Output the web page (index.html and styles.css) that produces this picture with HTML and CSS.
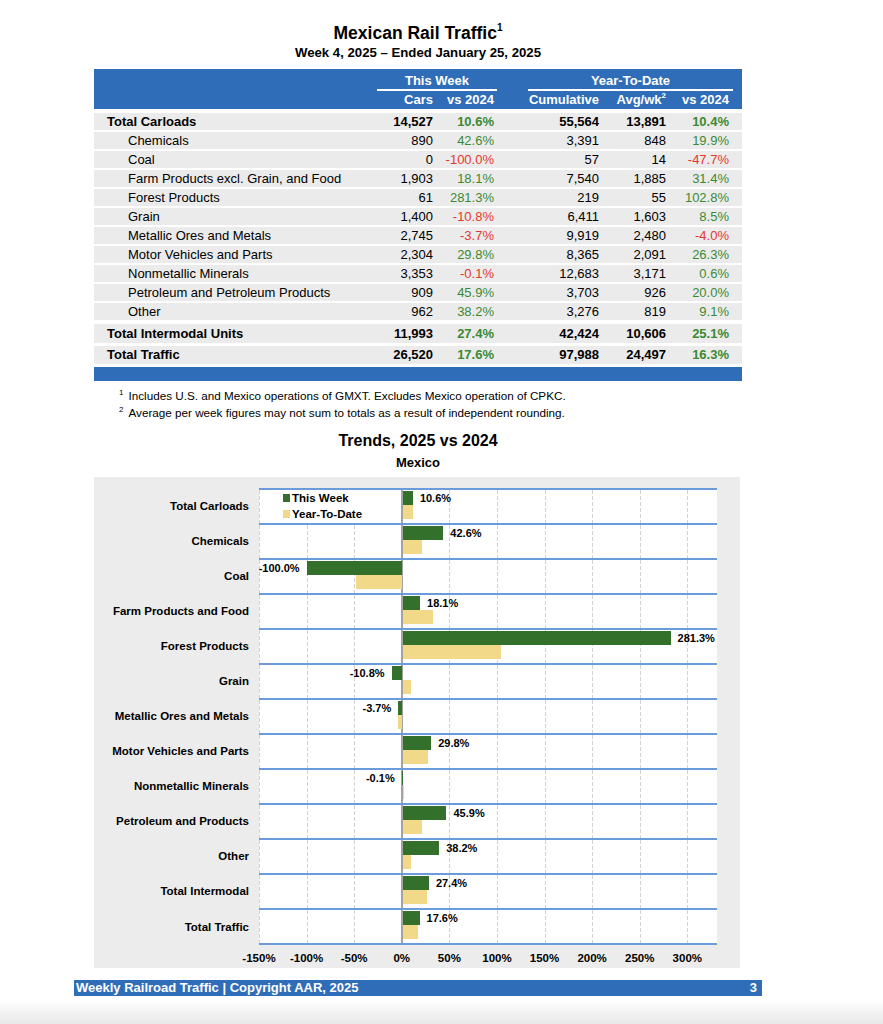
FILE: index.html
```html
<!DOCTYPE html>
<html>
<head>
<meta charset="utf-8">
<link rel="stylesheet" href="styles.css">
</head>
<body>
<div class="page">
  <h1 class="title">Mexican Rail Traffic<sup>1</sup></h1>
  <div class="subtitle">Week 4, 2025 – Ended January 25, 2025</div>

  <div class="thead">
    <div class="row r1">
      <span></span><span class="grp tw">This Week</span><span></span><span class="grp ytd">Year-To-Date</span><span></span>
    </div>
    <div class="row r2">
      <span></span><span class="num">Cars</span><span class="num">vs 2024</span><span></span><span class="num">Cumulative</span><span class="num">Avg/wk<sup>2</sup></span><span class="num">vs 2024</span><span></span>
    </div>
  </div>

  <div class="tbody">
    <div class="row tr total first"><span class="lab">Total Carloads</span><span class="num">14,527</span><span class="num g">10.6%</span><span></span><span class="num">55,564</span><span class="num">13,891</span><span class="num g">10.4%</span><span></span></div>
    <div class="row tr"><span class="lab">Chemicals</span><span class="num">890</span><span class="num g">42.6%</span><span></span><span class="num">3,391</span><span class="num">848</span><span class="num g">19.9%</span><span></span></div>
    <div class="row tr"><span class="lab">Coal</span><span class="num">0</span><span class="num r">-100.0%</span><span></span><span class="num">57</span><span class="num">14</span><span class="num r">-47.7%</span><span></span></div>
    <div class="row tr"><span class="lab">Farm Products excl. Grain, and Food</span><span class="num">1,903</span><span class="num g">18.1%</span><span></span><span class="num">7,540</span><span class="num">1,885</span><span class="num g">31.4%</span><span></span></div>
    <div class="row tr"><span class="lab">Forest Products</span><span class="num">61</span><span class="num g">281.3%</span><span></span><span class="num">219</span><span class="num">55</span><span class="num g">102.8%</span><span></span></div>
    <div class="row tr"><span class="lab">Grain</span><span class="num">1,400</span><span class="num r">-10.8%</span><span></span><span class="num">6,411</span><span class="num">1,603</span><span class="num g">8.5%</span><span></span></div>
    <div class="row tr"><span class="lab">Metallic Ores and Metals</span><span class="num">2,745</span><span class="num r">-3.7%</span><span></span><span class="num">9,919</span><span class="num">2,480</span><span class="num r">-4.0%</span><span></span></div>
    <div class="row tr"><span class="lab">Motor Vehicles and Parts</span><span class="num">2,304</span><span class="num g">29.8%</span><span></span><span class="num">8,365</span><span class="num">2,091</span><span class="num g">26.3%</span><span></span></div>
    <div class="row tr"><span class="lab">Nonmetallic Minerals</span><span class="num">3,353</span><span class="num r">-0.1%</span><span></span><span class="num">12,683</span><span class="num">3,171</span><span class="num g">0.6%</span><span></span></div>
    <div class="row tr"><span class="lab">Petroleum and Petroleum Products</span><span class="num">909</span><span class="num g">45.9%</span><span></span><span class="num">3,703</span><span class="num">926</span><span class="num g">20.0%</span><span></span></div>
    <div class="row tr"><span class="lab">Other</span><span class="num">962</span><span class="num g">38.2%</span><span></span><span class="num">3,276</span><span class="num">819</span><span class="num g">9.1%</span><span></span></div>
    <div class="row tr total ti"><span class="lab">Total Intermodal Units</span><span class="num">11,993</span><span class="num g">27.4%</span><span></span><span class="num">42,424</span><span class="num">10,606</span><span class="num g">25.1%</span><span></span></div>
    <div class="row tr total tt"><span class="lab">Total Traffic</span><span class="num">26,520</span><span class="num g">17.6%</span><span></span><span class="num">97,988</span><span class="num">24,497</span><span class="num g">16.3%</span><span></span></div>
  </div>
  <div class="tfoot"></div>

  <div class="notes">
    <p><sup>1</sup>Includes U.S. and Mexico operations of GMXT. Excludes Mexico operation of CPKC.</p>
    <p><sup>2</sup>Average per week figures may not sum to totals as a result of independent rounding.</p>
  </div>

  <h2 class="ctitle">Trends, 2025 vs 2024</h2>
  <div class="csub">Mexico</div>

  <div class="chart">
    <div class="crow">
      <div class="cat">Total Carloads</div>
      <div class="prow">
        <div class="legend">
          <div class="li"><i class="sw tw"></i>This Week</div>
          <div class="li"><i class="sw ytd"></i>Year-To-Date</div>
        </div>
        <div class="half neg"><div class="ln"></div><div class="ln"></div></div>
        <div class="half pos"><div class="ln"><i class="bar tw" style="width:10.09px"></i><b class="val">10.6%</b></div><div class="ln"><i class="bar ytd" style="width:9.9px"></i></div></div>
      </div>
    </div>
    <div class="crow">
      <div class="cat">Chemicals</div>
      <div class="prow">
        <div class="half neg"><div class="ln"></div><div class="ln"></div></div>
        <div class="half pos"><div class="ln"><i class="bar tw" style="width:40.56px"></i><b class="val">42.6%</b></div><div class="ln"><i class="bar ytd" style="width:18.94px"></i></div></div>
      </div>
    </div>
    <div class="crow">
      <div class="cat">Coal</div>
      <div class="prow">
        <div class="half neg"><div class="ln"><b class="val">-100.0%</b><i class="bar tw" style="width:95.2px"></i></div><div class="ln"><i class="bar ytd" style="width:45.41px"></i></div></div>
        <div class="half pos"><div class="ln"></div><div class="ln"></div></div>
      </div>
    </div>
    <div class="crow">
      <div class="cat">Farm Products and Food</div>
      <div class="prow">
        <div class="half neg"><div class="ln"></div><div class="ln"></div></div>
        <div class="half pos"><div class="ln"><i class="bar tw" style="width:17.23px"></i><b class="val">18.1%</b></div><div class="ln"><i class="bar ytd" style="width:29.89px"></i></div></div>
      </div>
    </div>
    <div class="crow">
      <div class="cat">Forest Products</div>
      <div class="prow">
        <div class="half neg"><div class="ln"></div><div class="ln"></div></div>
        <div class="half pos"><div class="ln"><i class="bar tw" style="width:267.8px"></i><b class="val">281.3%</b></div><div class="ln"><i class="bar ytd" style="width:97.87px"></i></div></div>
      </div>
    </div>
    <div class="crow">
      <div class="cat">Grain</div>
      <div class="prow">
        <div class="half neg"><div class="ln"><b class="val">-10.8%</b><i class="bar tw" style="width:10.28px"></i></div><div class="ln"></div></div>
        <div class="half pos"><div class="ln"></div><div class="ln"><i class="bar ytd" style="width:8.09px"></i></div></div>
      </div>
    </div>
    <div class="crow">
      <div class="cat">Metallic Ores and Metals</div>
      <div class="prow">
        <div class="half neg"><div class="ln"><b class="val">-3.7%</b><i class="bar tw" style="width:3.52px"></i></div><div class="ln"><i class="bar ytd" style="width:3.81px"></i></div></div>
        <div class="half pos"><div class="ln"></div><div class="ln"></div></div>
      </div>
    </div>
    <div class="crow">
      <div class="cat">Motor Vehicles and Parts</div>
      <div class="prow">
        <div class="half neg"><div class="ln"></div><div class="ln"></div></div>
        <div class="half pos"><div class="ln"><i class="bar tw" style="width:28.37px"></i><b class="val">29.8%</b></div><div class="ln"><i class="bar ytd" style="width:25.04px"></i></div></div>
      </div>
    </div>
    <div class="crow">
      <div class="cat">Nonmetallic Minerals</div>
      <div class="prow">
        <div class="half neg"><div class="ln"><b class="val">-0.1%</b><i class="bar tw" style="width:0.1px"></i></div><div class="ln"></div></div>
        <div class="half pos"><div class="ln"></div><div class="ln"><i class="bar ytd" style="width:0.57px"></i></div></div>
      </div>
    </div>
    <div class="crow">
      <div class="cat">Petroleum and Products</div>
      <div class="prow">
        <div class="half neg"><div class="ln"></div><div class="ln"></div></div>
        <div class="half pos"><div class="ln"><i class="bar tw" style="width:43.7px"></i><b class="val">45.9%</b></div><div class="ln"><i class="bar ytd" style="width:19.04px"></i></div></div>
      </div>
    </div>
    <div class="crow">
      <div class="cat">Other</div>
      <div class="prow">
        <div class="half neg"><div class="ln"></div><div class="ln"></div></div>
        <div class="half pos"><div class="ln"><i class="bar tw" style="width:36.37px"></i><b class="val">38.2%</b></div><div class="ln"><i class="bar ytd" style="width:8.66px"></i></div></div>
      </div>
    </div>
    <div class="crow">
      <div class="cat">Total Intermodal</div>
      <div class="prow">
        <div class="half neg"><div class="ln"></div><div class="ln"></div></div>
        <div class="half pos"><div class="ln"><i class="bar tw" style="width:26.08px"></i><b class="val">27.4%</b></div><div class="ln"><i class="bar ytd" style="width:23.9px"></i></div></div>
      </div>
    </div>
    <div class="crow last">
      <div class="cat">Total Traffic</div>
      <div class="prow">
        <div class="half neg"><div class="ln"></div><div class="ln"></div></div>
        <div class="half pos"><div class="ln"><i class="bar tw" style="width:16.76px"></i><b class="val">17.6%</b></div><div class="ln"><i class="bar ytd" style="width:15.52px"></i></div></div>
      </div>
    </div>
    <div class="axis">
      <span>-150%</span><span>-100%</span><span>-50%</span><span>0%</span><span>50%</span><span>100%</span><span>150%</span><span>200%</span><span>250%</span><span>300%</span>
    </div>
  </div>
</div>

<div class="footer"><span>Weekly Railroad Traffic | Copyright AAR, 2025</span><span>3</span></div>
<div class="shade"></div>
</body>
</html>
```

FILE: styles.css
```css
* { box-sizing: border-box; margin: 0; padding: 0; }

body {
  font-family: "Liberation Sans", Arial, Helvetica, sans-serif;
  color: #000;
  background: #fff;
}

.page {
  width: 648px;
  margin-left: 94px;
  padding-top: 22px;
}

.title {
  text-align: center;
  font-size: 17.5px;
  font-weight: bold;
  line-height: 22px;
}
.title sup {
  font-size: 10px;
  line-height: 0;
  vertical-align: 8px;
}

.subtitle {
  margin-top: 1px;
  text-align: center;
  font-size: 13.2px;
  font-weight: bold;
  line-height: 16px;
}

.row {
  display: grid;
  grid-template-columns: 283px 56px 61px 34px 71px 67px 63px 13px;
}
.num { text-align: right; white-space: nowrap; }

.thead {
  margin-top: 8px;
  height: 40px;
  padding-top: 3px;
  background: #2f6db9;
  color: #fff;
  font-weight: bold;
  font-size: 13px;
}
.thead .r1 { line-height: 17px; }
.thead .grp {
  text-align: center;
  border-bottom: 2px solid #fff;
}
.thead .grp.tw { grid-column: 2 / 4; margin-right: -3px; }
.thead .grp.ytd { grid-column: 5 / 8; margin-right: -4px; }
.thead .r2 { line-height: 18px; }
.thead sup {
  font-size: 8px;
  line-height: 0;
  vertical-align: 6px;
}

.tr {
  background: #ebebeb;
  height: 17px;
  line-height: 17px;
  margin-top: 2px;
  font-size: 13px;
}
.tr.first { margin-top: 4px; }
.tr .lab { padding-left: 34px; white-space: nowrap; }
.tr.total { font-weight: bold; }
.tr.total .lab { padding-left: 13px; }
.tr.ti { margin-top: 4px; height: 19px; line-height: 19px; }
.tr.tt { margin-top: 3px; height: 18px; line-height: 18px; }

.g { color: #3b8a33; }
.r { color: #e5372d; }

.tfoot {
  margin-top: 3px;
  height: 14px;
  background: #2f6db9;
}

.notes {
  margin-top: 6px;
  padding-left: 25px;
  font-size: 11.7px;
  line-height: 17px;
}
.notes sup {
  font-size: 8px;
  line-height: 0;
  vertical-align: 5px;
  margin-right: 5px;
}

.ctitle {
  margin-top: 10px;
  text-align: center;
  font-size: 16px;
  line-height: 20px;
  font-weight: bold;
}
.csub {
  margin-top: 4px;
  text-align: center;
  font-size: 13px;
  line-height: 16px;
  font-weight: bold;
}

.chart {
  margin-top: 6px;
  width: 646px;
  background: #ececec;
  padding-top: 11px;
  padding-bottom: 2px;
}

.crow {
  display: grid;
  grid-template-columns: 165px 458px;
}
.cat {
  display: flex;
  align-items: center;
  justify-content: flex-end;
  padding-right: 10px;
  font-size: 11.5px;
  font-weight: bold;
  white-space: nowrap;
}
.prow {
  position: relative;
  display: flex;
  height: 35px;
  padding-top: 1px;
  border-top: 2px solid #6a9bdb;
  background:
    linear-gradient(to right, transparent 142px, #a3a3a3 142px, #a3a3a3 144px, transparent 144px),
    repeating-linear-gradient(to bottom, transparent 0, transparent 4px, #fff 4px, #fff 6px),
    repeating-linear-gradient(to right, #d2d2d2 0, #d2d2d2 1px, transparent 1px, transparent 47.6px),
    #fff;
}
.crow.last .prow {
  height: 37px;
  border-bottom: 2px solid #6a9bdb;
}

.half { display: flex; flex-direction: column; }
.half.neg { width: 142.8px; flex-shrink: 0; }
.half.pos { flex: 1; }
.ln {
  height: 14px;
  display: flex;
  align-items: center;
}
.neg .ln { justify-content: flex-end; }

.bar {
  display: block;
  height: 14px;
  flex-shrink: 0;
}
.bar.tw { background: #33702c; }
.bar.ytd { background: #f2d98a; }
.pos .bar { margin-left: 1px; }

.val {
  flex-shrink: 0;
  white-space: nowrap;
  font-size: 11px;
  font-weight: bold;
}
.pos .val { margin-left: 7px; }
.neg .val { margin-right: 7px; }

.legend {
  position: absolute;
  left: 21px;
  top: 0;
  width: 86px;
  padding: 0 0 1px 3px;
  background: #fff;
  font-size: 11.5px;
  font-weight: bold;
  line-height: 16px;
  white-space: nowrap;
}
.li { display: flex; align-items: center; }
.sw {
  display: block;
  width: 7px;
  height: 8px;
  margin-right: 2px;
}
.sw.tw { background: #33702c; }
.sw.ytd { background: #f2d98a; }

.axis {
  display: flex;
  margin-left: 141.2px;
  margin-top: 5px;
  line-height: 16px;
  font-size: 11.5px;
  font-weight: bold;
}
.axis span {
  width: 47.6px;
  text-align: center;
  white-space: nowrap;
}

.footer {
  margin-top: 12px;
  margin-left: 74px;
  width: 688px;
  height: 16px;
  line-height: 16px;
  background: #2f6db9;
  color: #fff;
  font-size: 13px;
  font-weight: bold;
  display: flex;
  justify-content: space-between;
  padding: 0 5px 0 2px;
}

.shade {
  height: 24px;
  margin-top: 4px;
  background: linear-gradient(to bottom, #fff, #e8e8e8);
}
```
